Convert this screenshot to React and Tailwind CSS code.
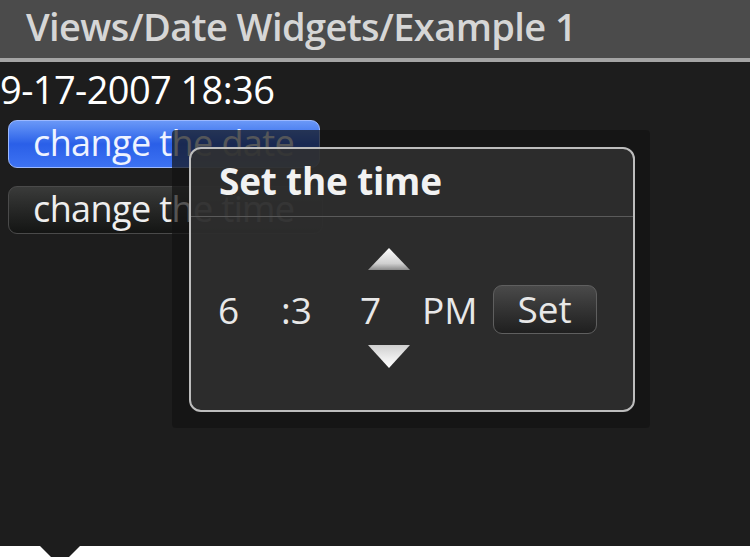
import React from 'react';

const font = { fontFamily: '"Open Sans", "Noto Sans", sans-serif' };

function Arrow({ up }) {
  return (
    <svg width="44" height="26" viewBox="0 0 44 26" className="block">
      <defs>
        <linearGradient id={up ? 'au' : 'ad'} x1="0" y1="0" x2="0" y2="1">
          <stop offset="0" stopColor={up ? '#ffffff' : '#cfcfcf'} />
          <stop offset="0.7" stopColor={up ? '#d0d0d0' : '#f4f4f4'} />
          <stop offset="1" stopColor={up ? '#8a8a8a' : '#ffffff'} />
        </linearGradient>
      </defs>
      {up ? (
        <path d="M22 3 L43 25 L1 25 Z" fill={`url(#au)`} />
      ) : (
        <path d="M1 3 L43 3 L22 26 Z" fill={`url(#ad)`} />
      )}
    </svg>
  );
}

export default function App() {
  return (
    <div className="w-[750px] h-[557px] flex flex-col bg-[#1d1d1d] overflow-hidden" style={font}>
      <div className="h-[58px] bg-[#4b4b4b] flex items-center pl-[26px] pb-[6px] shrink-0">
        <span className="text-[38px] leading-none font-semibold text-[#d6d6d6] tracking-[-0.6px]">Views/Date Widgets/Example 1</span>
      </div>
      <div className="h-[4px] bg-[#a4a4a4] shrink-0" />
      <div className="relative flex-1 bg-[#1d1d1d] flex flex-col">
        <div className="h-[52px] flex items-center text-[38px] leading-none text-white tracking-[-0.6px] pt-[2px]">9-17-2007 18:36</div>
        <div className="ml-[8px] mt-[6px] w-[312px] h-[48px] rounded-[9px] border border-[#9bb8ff] bg-gradient-to-b from-[#6a98f7] via-[#2a5fe8] to-[#3d72f2] flex items-center pl-[24px] pb-[3px] text-[36px] leading-none text-[#eef3ff] tracking-[-0.6px]">
          change the date
        </div>
        <div className="ml-[8px] mt-[18px] w-[315px] h-[48px] rounded-[9px] border border-[#4a4a4a] bg-gradient-to-b from-[#3a3b3a] to-[#141514] flex items-center pl-[24px] pb-[3px] text-[36px] leading-none text-[#eeeeee] tracking-[-0.6px]">
          change the time
        </div>

        <div className="absolute left-[172px] top-[68px] w-[478px] h-[298px] bg-[#121212]/70 rounded-[4px] p-[17px]">
          <div className="w-[446px] h-[265px] rounded-[12px] border-2 border-[#bdbdbd] bg-[#303030]/85 flex flex-col">
            <div className="h-[68px] flex items-center pl-[28px] pb-[4px] border-b border-[#5a5a5a]">
              <span className="text-[37px] leading-none font-bold text-[#f2f2f2] tracking-[-0.2px]">Set the time</span>
            </div>
            <div className="flex-1 flex items-center pl-[27px] pb-[8px] text-[37px] leading-none text-[#e8e8e8]">
              <span className="w-[63px]">6</span>
              <span className="w-[79px]">:3</span>
              <div className="flex flex-col w-[62px] mb-[6px]">
                <div className="ml-[7px]"><Arrow up /></div>
                <span className="h-[71px] flex items-center pt-[6px]">7</span>
                <div className="ml-[7px]"><Arrow /></div>
              </div>
              <span>PM</span>
              <div className="ml-[15px] w-[104px] h-[49px] rounded-[9px] border border-[#5f5f5f] bg-gradient-to-b from-[#4a4a4a] to-[#1f1f1f] flex items-center justify-center pb-[3px]">
                Set
              </div>
            </div>
          </div>
        </div>

        <div className="mt-auto h-[11px] bg-white relative">
          <div className="absolute left-[40px] top-0 w-0 h-0 border-l-[20px] border-r-[20px] border-t-[20px] border-l-transparent border-r-transparent border-t-[#1d1d1d]" />
        </div>
      </div>
    </div>
  );
}
